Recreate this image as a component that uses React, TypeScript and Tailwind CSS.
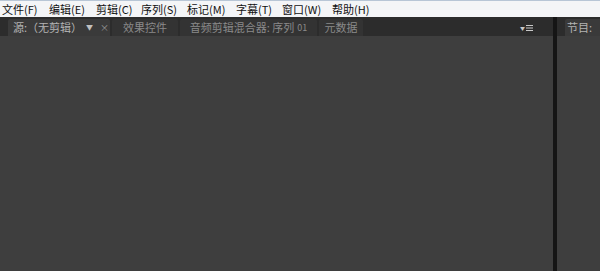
const font = { fontFamily: '"Noto Sans CJK SC", "Noto Sans", sans-serif' };

const menus: [string, number][] = [
  ['文件(F)', 47],
  ['编辑(E)', 47],
  ['剪辑(C)', 45],
  ['序列(S)', 46],
  ['标记(M)', 49],
  ['字幕(T)', 46],
  ['窗口(W)', 50],
  ['帮助(H)', 40],
];

export default function App() {
  return (
    <div className="w-[600px] h-[271px] flex flex-col bg-[#3e3e3e] overflow-hidden" style={font}>
      {/* menu bar */}
      <div className="h-[17px] flex items-center bg-[#f4f5f7] border-t border-[#b8c6d6] text-[11px] leading-none text-[#111] pl-[2px]">
        {menus.map(([m, w]) => (
          <span key={m} style={{ width: w }} className="shrink-0">
            {m}
          </span>
        ))}
      </div>

      {/* panels */}
      <div className="flex-1 flex">
        {/* left panel */}
        <div className="w-[553px] flex flex-col">
          <div className="h-[19px] flex items-end bg-[#2c2c2c] pl-[8px] pr-[20px] text-[11px] leading-none">
            <div className="h-[17px] w-[102px] flex items-center bg-[#3a3a3a] rounded-t-[2px] pl-[5px] text-[#b4b4b4]">
              <span>源:（无剪辑）</span>
              <span className="ml-[4px] text-[7px] text-[#c0c0c0]">▼</span>
              <span className="ml-[7px] text-[9px] text-[#9a9a9a]">×</span>
            </div>
            <div className="h-[17px] w-[66px] ml-[2px] flex items-center justify-center bg-[#333333] text-[#8a8a8a] rounded-t-[2px]">
              效果控件
            </div>
            <div className="h-[17px] w-[137px] ml-[2px] flex items-center justify-center bg-[#333333] text-[#8a8a8a] rounded-t-[2px]">
              音频剪辑混合器: 序列 <span className="ml-[3px] text-[9px]">01</span>
            </div>
            <div className="h-[17px] w-[44px] ml-[2px] flex items-center justify-center bg-[#333333] text-[#8a8a8a] rounded-t-[2px]">
              元数据
            </div>
            <div className="flex-1" />
            <div className="h-[17px] flex items-center gap-[1px] text-[#c8c8c8]">
              <span className="text-[5px]">▼</span>
              <svg width="7" height="6" viewBox="0 0 7 6">
                <rect x="0" y="0" width="7" height="1" fill="#c8c8c8" />
                <rect x="0" y="2.5" width="7" height="1" fill="#c8c8c8" />
                <rect x="0" y="5" width="7" height="1" fill="#c8c8c8" />
              </svg>
            </div>
          </div>
          <div className="flex-1 bg-[#3e3e3e]" />
        </div>

        {/* divider */}
        <div className="w-[4px] bg-[#151515]" />

        {/* right panel */}
        <div className="flex-1 flex flex-col">
          <div className="h-[19px] flex items-end bg-[#2c2c2c] pl-[8px] text-[11px] leading-none">
            <div className="h-[17px] flex-1 flex items-center bg-[#3a3a3a] rounded-tl-[2px] pl-[2px] text-[#b4b4b4]">
              节目:
            </div>
          </div>
          <div className="flex-1 bg-[#3e3e3e]" />
        </div>
      </div>
    </div>
  );
}
